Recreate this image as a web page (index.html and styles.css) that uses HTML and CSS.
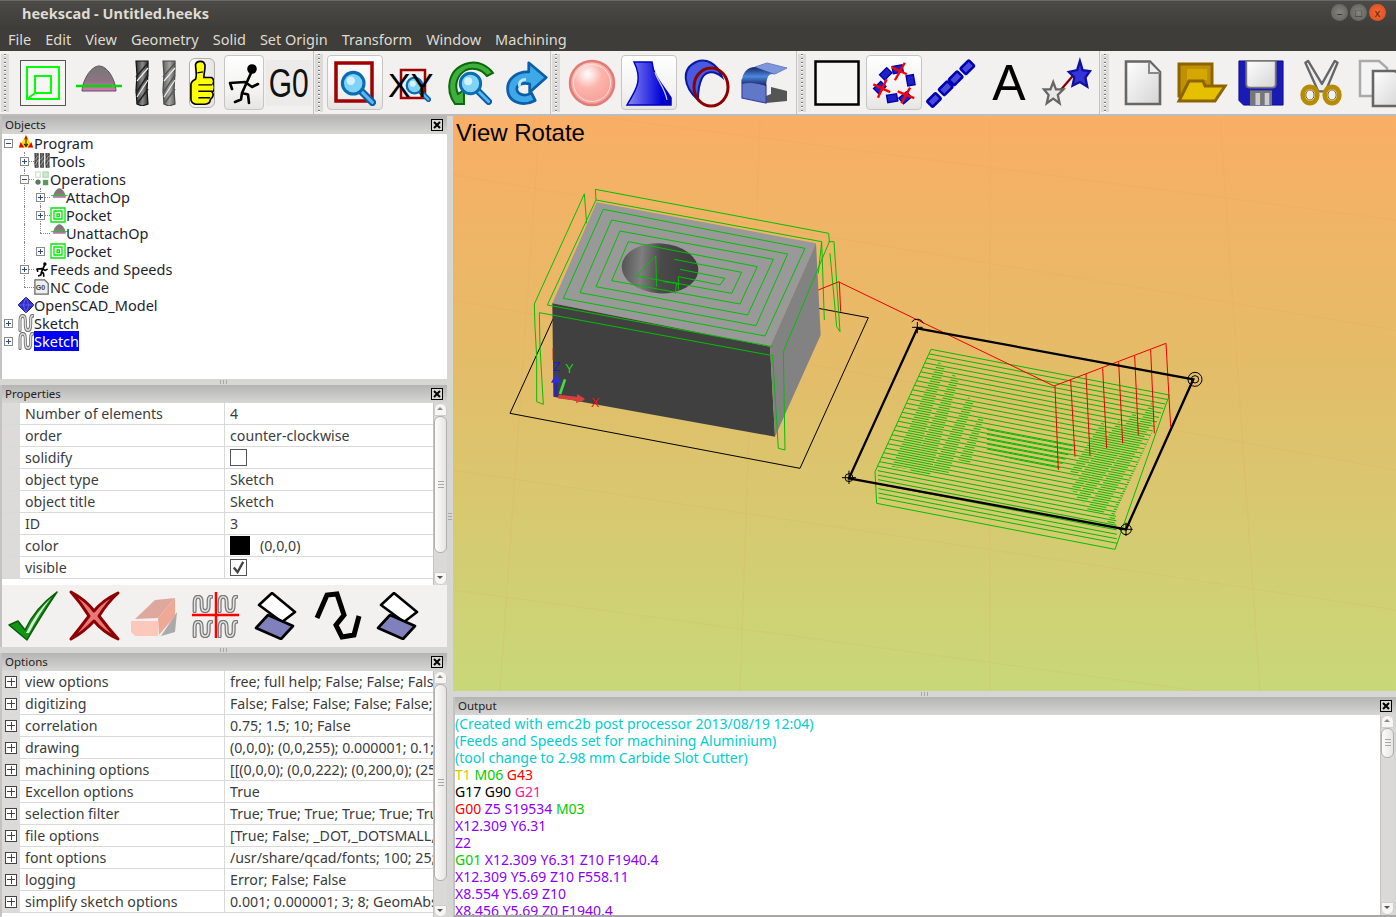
FILE: index.html
```html
<!DOCTYPE html>
<html lang="en">
<head>
<meta charset="utf-8">
<title>heekscad - Untitled.heeks</title>
<link rel="stylesheet" href="styles.css">
</head>
<body>
<svg class="defs" width="0" height="0">
	<defs>
		<linearGradient id="g_steel" x1="0" x2="1" y1="0" y2="0"><stop offset="0" stop-color="#333"/><stop offset=".55" stop-color="#8a8a8a"/><stop offset="1" stop-color="#333"/></linearGradient>
		<linearGradient id="g_dome" x1="0" x2="0" y1="0" y2="1"><stop offset="0" stop-color="#777"/><stop offset=".6" stop-color="#8d7482"/><stop offset="1" stop-color="#e070c0"/></linearGradient>
		<radialGradient id="g_ball" cx=".4" cy=".3" r=".8"><stop offset="0" stop-color="#fff"/><stop offset=".4" stop-color="#fcb4ac"/><stop offset="1" stop-color="#f49a92"/></radialGradient>
		<linearGradient id="g_blue" x1="0" x2="1" y1="0" y2="0"><stop offset="0" stop-color="#8a8cf4"/><stop offset=".8" stop-color="#0000d8"/><stop offset="1" stop-color="#0000b0"/></linearGradient>
		<linearGradient id="g_band" x1="0" x2="0" y1="0" y2="1"><stop offset="0" stop-color="#16246a"/><stop offset=".5" stop-color="#4c88dc"/><stop offset="1" stop-color="#10205c"/></linearGradient>
		<linearGradient id="g_paper" x1="0" x2="1" y1="0" y2="1"><stop offset="0" stop-color="#fff"/><stop offset="1" stop-color="#d4d4d4"/></linearGradient>
		<linearGradient id="g_hole" x1="0" x2="1" y1="0" y2="0"><stop offset="0" stop-color="#555"/><stop offset=".25" stop-color="#807f7f"/><stop offset=".5" stop-color="#4a4a4a"/><stop offset="1" stop-color="#3c3c3c"/></linearGradient>

		<symbol id="s_pocket" viewBox="0 0 46 46">
			<rect x=".5" y=".5" width="45" height="45" fill="#f6f6f5" stroke="#555"/>
			<path d="M7 7H39V39H7ZM15 16H31V33H15ZM7 39L15 33" fill="none" stroke="#0f0" stroke-width="2"/>
		</symbol>
		<symbol id="s_mini_pocket" viewBox="0 0 16 16">
			<path d="M1 1H15V15H1ZM4 4H12V12H4ZM7 7H9.500V9.500H7Z" fill="none" stroke="#00e800" stroke-width="1.300"/>
		</symbol>
		<symbol id="s_op" viewBox="0 0 50 46">
			<path d="M9 31C10 18 19 6 26 6C34 6 42 18 43 31Z" fill="url(#g_dome)" stroke="#555"/>
			<path d="M3 26H49" stroke="#0d0" stroke-width="2.500"/>
		</symbol>
		<symbol id="s_tool" viewBox="0 0 16 46" preserveAspectRatio="none">
			<path d="M2 1H14V12L13 30L14 44L8 46L3 44L2 30L3 15Z" fill="url(#g_steel)" stroke="#111" stroke-width="1.200"/>
			<path d="M2 17L14 3M2 33L14 15M3 44L14 29" stroke="#222" stroke-width="1.500"/>
			<path d="M3 21L14 8M3 37L14 20" stroke="#eee" stroke-width="1.200"/>
		</symbol>
		<symbol id="s_thumb" viewBox="0 0 26 50">
			<path d="M6 5C7 1 15 0 16 5C17 9 15 14 15 19L23 19C26 20 26 24 25 26C27 28 27 33 24 35C26 37 25 41 22 43C22 47 19 48 16 48H6C2 47 1 45 1 42V27C1 24 4 22 6 21C8 17 6 10 6 5Z" fill="#ff0" stroke="#000" stroke-width="1.800"/>
			<path d="M9 27H24M9 34H24M9 41H22M8 14L14 13" fill="none" stroke="#000" stroke-width="1.500"/>
		</symbol>
		<symbol id="s_run" viewBox="0 0 40 50">
			<circle cx="28" cy="11" r="4.800" fill="#000"/>
			<path class="run_path" d="M27 15L18 35L24 36.500L25 45M18 35L17 41.500L11 44M21 24L6 25L8 31M21 24L28 29L34 26" fill="none" stroke="#000" stroke-linecap="round" stroke-linejoin="round"/>
		</symbol>
		<symbol id="s_glass" viewBox="0 0 30 30">
			<path d="M17 17L27 27" stroke="#0a60a8" stroke-width="6" stroke-linecap="round"/>
			<path d="M17 17L27 27" stroke="#5cb8ec" stroke-width="2.500" stroke-linecap="round"/>
			<circle cx="11" cy="11" r="9" fill="#7fd4f6" stroke="#0a6cb4" stroke-width="2.600"/>
			<circle cx="9" cy="9" r="3.500" fill="#d4f2fc"/>
		</symbol>
		<symbol id="s_lasso" viewBox="0 0 46 48">
			<path d="M5 13L18 1L41 20L28 30Z" fill="#fff" stroke="#000" stroke-width="2.600" stroke-linejoin="round"/>
			<path d="M2 36L14 23L39 34L27 47Z" fill="#8080bc" stroke="#000" stroke-width="2.600" stroke-linejoin="round"/>
		</symbol>
		<symbol id="s_sketch" viewBox="0 0 24 20" preserveAspectRatio="none">
			<g fill="none" stroke-linecap="round">
				<path d="M3 18V8Q3 2 7 2T11 8V12Q11 18 15 18T19 12V6Q19 2 22 2" stroke="#777" stroke-width="4.600"/>
				<path d="M3 18V8Q3 2 7 2T11 8V12Q11 18 15 18T19 12V6Q19 2 22 2" stroke="#e4e4e4" stroke-width="1.800"/>
			</g>
		</symbol>
		<symbol id="s_program" viewBox="0 0 18 18">
			<path d="M9 0L17 14H1Z" fill="#fd0"/>
			<path d="M9 0L11 5H7ZM1 14L3 8L7 14ZM17 14L15 8L11 14Z" fill="#e00"/>
			<path d="M9 5V12M7 10L9 13L11 10" fill="none" stroke="#222" stroke-width="1.200"/>
		</symbol>
		<symbol id="s_ops" viewBox="0 0 18 18">
			<rect x="2" y="1" width="5" height="6" fill="none" stroke="#b8d8b8"/>
			<rect x="10" y="1" width="6" height="6" fill="#cfe8cf" stroke="#a8d0a8"/>
			<circle cx="4.500" cy="12.500" r="3" fill="#5a7a5a"/>
			<rect x="10" y="10" width="6" height="6" fill="#5a9a5a"/>
		</symbol>
		<symbol id="s_nc" viewBox="0 0 18 18">
			<path d="M1 1H12L16 5V17H1Z" fill="#eee" stroke="#666" stroke-width="1.400"/>
			<text x="2" y="12.500" class="nc_text">G0</text>
		</symbol>
		<symbol id="s_model" viewBox="0 0 18 18">
			<path d="M9 0L18 9L9 18L0 9Z" fill="#3030c8" stroke="#101088"/>
			<path d="M9 0L6 9L9 18M9 0L12 9L9 18M0 9H18" fill="none" stroke="#6a6af0" stroke-width=".8"/>
		</symbol>

		<path id="hatch" d="M303 148l715 137m-721.170-123.520l715 137m-721.170-123.520l715 137m-721.170-123.520l715 137m-721.170-123.520l715 137m-721.170-123.520l715 137m-721.170-123.520l715 137m-721.170-123.520l715 137m-721.170-123.520l715 137m-721.170-123.520l715 137m-721.170-123.520l715 137m-721.170-123.520l715 137m-721.170-123.520l715 137m-721.170-123.520l715 137m-721.170-123.520l715 137m-721.170-123.520l715 137m-721.170-123.520l715 137m-721.170-123.520l715 137m-721.170-123.520l715 137m-721.170-123.520l715 137m-721.170-123.520l715 137m-721.170-123.520l715 137m-721.170-123.520l715 137m-721.170-123.520l715 137m-721.170-123.520l715 137m-721.170-123.520l715 137m-721.170-123.520l715 137m-714.500-123.520l715 137m-714.500-123.520l715 137m-714.500-123.520l715 137m-714.500-123.520l715 137m-714.500-123.520l715 137m-714.500-123.520l715 137m-714.500-123.520l715 137"/>
		<clipPath id="c_ridges">
			<path d="M325 185L345 200L250 510L185 500Z"/>
			<path d="M370 220L385 240L300 525L240 515Z"/>
			<path d="M415 290L430 310L355 520L305 510Z"/>
			<path d="M450 345L460 360L420 490L385 480Z"/>
			<path d="M1018 290L1022 340L880 680L830 670Z"/>
			<path d="M965 305L975 350L820 640L770 630Z"/>
			<path d="M915 330L925 380L765 610L735 600Z"/>
			<path d="M868 360L875 410L740 580L720 570Z"/>
			<path d="M820 360L828 420L735 530L715 525Z"/>
		</clipPath>
		<clipPath id="c_center">
			<path d="M470 385L735 435L685 510L470 460Z"/>
		</clipPath>
	</defs>
</svg>

<div class="window">
	<div class="titlebar">
		<span class="title">heekscad - Untitled.heeks</span>
		<div class="win_btns">
			<span class="win_btn">&#8211;</span>
			<span class="win_btn">&#9633;</span>
			<span class="win_btn close">x</span>
		</div>
	</div>
	<ul class="menubar">
		<li>File</li>
		<li>Edit</li>
		<li>View</li>
		<li>Geometry</li>
		<li>Solid</li>
		<li>Set Origin</li>
		<li>Transform</li>
		<li>Window</li>
		<li>Machining</li>
	</ul>

	<div class="toolbar">
		<div class="tb_group g_cam">
			<span class="grip"></span>
			<span class="tb_btn w54"><svg class="ic"><use href="#s_pocket"/></svg></span>
			<span class="tb_btn w56"><svg class="ic wide"><use href="#s_op"/></svg></span>
			<span class="tb_btn w32"><svg class="ic drill"><use href="#s_tool"/></svg></span>
			<span class="tb_btn w22"><svg class="ic drill soft"><use href="#s_tool"/></svg></span>
			<span class="tb_btn w44"><svg class="ic thumb"><use href="#s_thumb"/></svg></span>
			<span class="tb_btn w40 on"><svg class="ic run"><use href="#s_run"/></svg></span>
			<span class="tb_btn w50"><span class="g0">G0</span></span>
		</div>
		<div class="tb_group g_view">
			<span class="grip"></span>
			<span class="tb_btn w56 on">
				<svg class="ic" viewBox="0 0 46 46"><rect x="4" y="3" width="36" height="38" fill="none" stroke="#a00000" stroke-width="3.500"/><use href="#s_glass" x="8" y="10" width="36" height="36"/></svg>
			</span>
			<span class="tb_btn">
				<svg class="ic" viewBox="0 0 46 46"><rect x="12" y="10" width="24" height="28" fill="none" stroke="#a00000" stroke-width="2.500"/><use href="#s_glass" x="16" y="16" width="26" height="26"/><text x="-1" y="37" class="xy_text">XY</text></svg>
			</span>
			<span class="tb_btn">
				<svg class="ic" viewBox="0 0 46 46"><path d="M8 44C-2 30 0 8 22 3C32 1 41 6 46 13L40 16C34 9 26 7 19 10C10 15 7 25 11 34L17 30L17 44Z" fill="#3fae3f" stroke="#0a6a0a" stroke-width="2"/><use href="#s_glass" x="11" y="11" width="34" height="34"/></svg>
			</span>
			<span class="tb_btn w54">
				<svg class="ic" viewBox="-2 -2 50 50"><path d="M26 1L45 17L27 33V24C18 22 13 26 13 29C13 36 22 38 29 34L33 42C18 50 3 43 3 29C3 18 14 10 26 11Z" fill="#3fa8e8" stroke="#0a5fa8" stroke-width="3" stroke-linejoin="round"/><path d="M23 19C18 19 15 22 16 27" fill="none" stroke="#bfe8fc" stroke-width="3"/></svg>
			</span>
		</div>
		<div class="tb_group g_solid">
			<span class="grip"></span>
			<span class="tb_btn w56">
				<svg class="ic" viewBox="0 0 46 46"><circle cx="23" cy="23" r="22" fill="url(#g_ball)" stroke="#e07c78" stroke-width="2.500"/><circle cx="23" cy="23" r="18.500" fill="none" stroke="#fde0dc" stroke-width="1"/></svg>
			</span>
			<span class="tb_btn on rev">
				<svg class="ic" viewBox="0 0 46 46"><path d="M8 2H26C27 16 38 26 45 38V45H1C8 32 18 22 8 2Z" fill="url(#g_blue)" stroke="#0000c0" stroke-width="1.500"/><path d="M29 12C31 20 39 28 41 40" fill="none" stroke="#c8ccfa" stroke-width="1.200"/></svg>
			</span>
			<span class="tb_btn">
				<svg class="ic" viewBox="0 0 46 46"><path d="M14 40C-1 26 -3 9 12 2C22 -2 33 3 38 17C30 10 22 11 18 18C15 24 14 32 14 40Z" fill="#4a5ae0" stroke="#0a1aa0" stroke-width="2"/><ellipse cx="27" cy="27" rx="17" ry="19" fill="none" stroke="#8c0000" stroke-width="3"/></svg>
			</span>
			<span class="tb_btn w56">
				<svg class="ic" viewBox="0 0 46 46"><path d="M30 27L46 31V41L25 43V36L30 34Z" fill="#555"/><path d="M14 7L26 3L46 8L34 14L16 12Z" fill="#7f96dc" stroke="#6a80c8"/><path d="M1 20L25 25V43L1 38Z" fill="#6078c8" stroke="#3f3fa8" stroke-width="1.200"/><path d="M1 24C0 14 6 7 14 7L34 14C28 13 26 16 25 26C18 23 8 22 1 24Z" fill="url(#g_band)"/></svg>
			</span>
		</div>
		<div class="tb_group g_draw">
			<span class="grip"></span>
			<span class="tb_btn"><svg class="ic" viewBox="0 0 46 46"><rect x="1.500" y="1.500" width="43" height="43" fill="#f6f6f5" stroke="#000" stroke-width="2.500"/></svg></span>
			<span class="tb_btn on w56">
				<svg class="ic" viewBox="0 0 50 50">
					<g fill="#2020c8" stroke="#0000a8" stroke-width="1.500">
						<rect x="-4" y="-5.500" width="8" height="11" transform="translate(16 15) rotate(45)"/>
						<rect x="-4" y="-5.500" width="8" height="11" transform="translate(29 10) rotate(80)"/>
						<rect x="-4" y="-5.500" width="8" height="11" transform="translate(43 22) rotate(-10)"/>
						<rect x="-4" y="-5.500" width="8" height="11" transform="translate(37 41) rotate(50)"/>
						<rect x="-4" y="-5.500" width="8" height="11" transform="translate(23 41.500) rotate(80)"/>
						<rect x="-4" y="-5.500" width="8" height="11" transform="translate(9.500 30) rotate(45)"/>
					</g>
					<path d="M26 22L36.700 3M22.500 8L39 15.500M7.500 41L17 21M2.500 26.500L20.800 35M33 47L42.500 30M29 34L47 41.500" stroke="#f00" stroke-width="2.600"/>
				</svg>
			</span>
			<span class="tb_btn">
				<svg class="ic" viewBox="0 0 46 46">
					<g fill="#4a4adc" stroke="#0000b0" stroke-width="2.600">
						<rect x="-4" y="-6" width="8" height="12" rx="1" transform="translate(39.300 7.300) rotate(45)"/>
						<rect x="-4" y="-6" width="8" height="12" rx="1" transform="translate(27.700 18.300) rotate(45)"/>
						<rect x="-4" y="-6" width="8" height="12" rx="1" transform="translate(17.700 28.300) rotate(45)"/>
						<rect x="-4" y="-6" width="8" height="12" rx="1" transform="translate(6 40) rotate(45)"/>
					</g>
				</svg>
			</span>
			<span class="tb_btn"><span class="big_a">A</span></span>
			<span class="tb_btn">
				<svg class="ic" viewBox="0 0 50 50"><path d="M10 42L34 14" stroke="#8c0000" stroke-width="2.500"/><path d="M10 24L13 32L21 32L15 38L17 47L10 42L3 47L5 38L0 32L7 32Z" fill="#e8e8e8" stroke="#666" stroke-width="2.500"/><path d="M39 1L42 11L50 12L45 19L47 29L39 24L31 28L33 19L27 13L36 11Z" fill="#3434d8" stroke="#1010a0" stroke-width="2.500"/></svg>
			</span>
		</div>
		<div class="tb_group g_file">
			<span class="grip"></span>
			<span class="tb_btn w60"><svg class="ic" viewBox="0 0 46 46"><path d="M6 1.500H30L40 12V44H6Z" fill="url(#g_paper)" stroke="#666" stroke-width="2.600"/><path d="M29 2V13H40" fill="#eee" stroke="#888" stroke-width="2"/></svg></span>
			<span class="tb_btn"><svg class="ic folder" viewBox="0 0 50 46"><path d="M2 4H35V36H2Z" fill="#c09000" stroke="#8c6400" stroke-width="3"/><path d="M10 9H30V20H16L10 31Z" fill="#d4a800"/><path d="M2 41L12 21H26L28 26H48L38 41Z" fill="#e4c000" stroke="#8c6400" stroke-width="3"/></svg></span>
			<span class="tb_btn w60"><svg class="ic folder" viewBox="0 0 50 50"><path d="M1 1H49V49H6L1 44Z" fill="#1a1ab4" stroke="#0a0a90"/><path d="M9 1H41V26Q41 30 37 30H13Q9 30 9 26Z" fill="url(#g_paper)" stroke="#777" stroke-width="2"/><path d="M13 33H37V49H13Z" fill="#777"/><path d="M19 36H24V49H19ZM29 36H34V49H29Z" fill="#ccc"/></svg></span>
			<span class="tb_btn w60"><svg class="ic" viewBox="0 0 46 50"><path d="M9 1L24 26L38 1L41 3L28 34L20 34L6 3Z" fill="#eee" stroke="#666" stroke-width="2.500" stroke-linejoin="round"/><g fill="none" stroke="#b88c00" stroke-width="5"><ellipse cx="11" cy="38" rx="8" ry="9"/><ellipse cx="35" cy="38" rx="8" ry="9"/></g><g fill="none" stroke="#6a5000"><ellipse cx="11" cy="38" rx="4.500" ry="5.500"/><ellipse cx="35" cy="38" rx="4.500" ry="5.500"/></g></svg></span>
			<span class="tb_btn"><svg class="ic" viewBox="0 0 46 46"><path d="M3 1H22L30 8V36H3Z" fill="#f4f4f4" stroke="#aaa" stroke-width="2.500"/><path d="M16 11H38L46 18V46H16Z" fill="url(#g_paper)" stroke="#666" stroke-width="2.600"/></svg></span>
		</div>
	</div>

	<div class="main">
		<div class="left_col">
			<section class="pane p_objects">
				<header class="pane_head">Objects<svg class="x_box" viewBox="0 0 12 12"><rect x=".5" y=".5" width="11" height="11" fill="#d8d8d6" stroke="#000"/><path d="M3 3L9 9M9 3L3 9" stroke="#000" stroke-width="2"/></svg></header>
				<div class="tree">
					<div class="t_row"><span class="t_cell"><i class="t_box"></i></span><svg class="t_ic"><use href="#s_program"/></svg>Program</div>
					<div class="t_row"><span class="t_cell"></span><span class="t_cell tee"><i class="t_box plus"></i></span><svg class="t_ic"><use href="#s_tool" x="0" y="1" width="5" height="15"/><use href="#s_tool" x="5.500" y="1" width="5" height="15"/><use href="#s_tool" x="11" y="1" width="5" height="15"/></svg>Tools</div>
					<div class="t_row"><span class="t_cell"></span><span class="t_cell tee"><i class="t_box"></i></span><svg class="t_ic"><use href="#s_ops"/></svg>Operations</div>
					<div class="t_row"><span class="t_cell"></span><span class="t_cell line"></span><span class="t_cell tee"><i class="t_box plus"></i></span><svg class="t_ic"><use href="#s_op" width="18" height="17" y="-2"/></svg>AttachOp</div>
					<div class="t_row"><span class="t_cell"></span><span class="t_cell line"></span><span class="t_cell tee"><i class="t_box plus"></i></span><svg class="t_ic"><use href="#s_mini_pocket"/></svg>Pocket</div>
					<div class="t_row"><span class="t_cell"></span><span class="t_cell line"></span><span class="t_cell end"></span><svg class="t_ic"><use href="#s_op" width="18" height="17" y="-2"/></svg>UnattachOp</div>
					<div class="t_row"><span class="t_cell"></span><span class="t_cell line"></span><span class="t_cell plain"><i class="t_box plus"></i></span><svg class="t_ic"><use href="#s_mini_pocket"/></svg>Pocket</div>
					<div class="t_row"><span class="t_cell"></span><span class="t_cell tee"><i class="t_box plus"></i></span><svg class="t_ic mini_run"><use href="#s_run"/></svg>Feeds and Speeds</div>
					<div class="t_row"><span class="t_cell"></span><span class="t_cell end"></span><svg class="t_ic"><use href="#s_nc"/></svg>NC Code</div>
					<div class="t_row"><span class="t_cell"></span><svg class="t_ic"><use href="#s_model"/></svg>OpenSCAD_Model</div>
					<div class="t_row"><span class="t_cell"><i class="t_box plus"></i></span><svg class="t_ic"><use href="#s_sketch"/></svg>Sketch</div>
					<div class="t_row"><span class="t_cell"><i class="t_box plus"></i></span><svg class="t_ic"><use href="#s_sketch"/></svg><span class="t_sel">Sketch</span></div>
				</div>
			</section>
			<div class="split_h"></div>

			<section class="pane p_props">
				<header class="pane_head">Properties<svg class="x_box" viewBox="0 0 12 12"><rect x=".5" y=".5" width="11" height="11" fill="#d8d8d6" stroke="#000"/><path d="M3 3L9 9M9 3L3 9" stroke="#000" stroke-width="2"/></svg></header>
				<div class="grid_wrap">
					<div class="prop_grid">
						<div class="p_row"><span class="gutter"></span><span class="p_name">Number of elements</span><span class="p_val">4</span></div>
						<div class="p_row"><span class="gutter"></span><span class="p_name">order</span><span class="p_val">counter-clockwise</span></div>
						<div class="p_row"><span class="gutter"></span><span class="p_name">solidify</span><span class="p_val"><i class="check"></i></span></div>
						<div class="p_row"><span class="gutter"></span><span class="p_name">object type</span><span class="p_val">Sketch</span></div>
						<div class="p_row"><span class="gutter"></span><span class="p_name">object title</span><span class="p_val">Sketch</span></div>
						<div class="p_row"><span class="gutter"></span><span class="p_name">ID</span><span class="p_val">3</span></div>
						<div class="p_row"><span class="gutter"></span><span class="p_name">color</span><span class="p_val"><i class="swatch"></i>(0,0,0)</span></div>
						<div class="p_row"><span class="gutter"></span><span class="p_name">visible</span><span class="p_val"><i class="check"><svg viewBox="0 0 16 16"><path d="M3 8L7 13L13 2" fill="none" stroke="#444" stroke-width="2.500"/></svg></i></span></div>
					</div>
					<div class="vscroll s_props"><span class="arrow up"></span><span class="thumb"></span><span class="track"></span><span class="arrow down"></span></div>
				</div>
				<div class="input_bar">
					<svg class="ib_ic" viewBox="0 0 48 48"><path d="M0 33L9 29L16 38Q26 16 48 0Q33 22 18 48Z" fill="#149414" stroke="#0a5a0a" stroke-width="1.500" stroke-linejoin="round"/><path d="M17 41Q27 20 42 6Q30 22 20 41Z" fill="#d8f0d8"/></svg>
					<svg class="ib_ic" viewBox="0 0 48 48"><path d="M1 0Q16 8 24 19Q33 8 48 1Q37 11 29 24Q38 36 48 47Q33 40 24 29Q14 40 1 47Q10 36 19 24Q11 11 1 0Z" fill="#e87878" stroke="#8c0000" stroke-width="3" stroke-linejoin="round"/></svg>
					<svg class="ib_ic" viewBox="0 0 48 48"><path d="M46 20L44 40L20 47L30 44Z" fill="#aaa"/><path d="M4 27L24 8L44 6L27 26Z" fill="#dfa89e"/><path d="M27 26L44 6V24L28 43Z" fill="#f0a896"/><path d="M0 29H27V44H4L0 40Z" fill="#fdc8bc"/></svg>
					<svg class="ib_ic" viewBox="0 0 48 48"><use href="#s_sketch" x="0" y="3" width="21" height="18"/><use href="#s_sketch" x="25" y="3" width="21" height="18"/><use href="#s_sketch" x="0" y="28" width="21" height="18"/><use href="#s_sketch" x="25" y="28" width="21" height="18"/><path d="M24 0V46M0 23H47" stroke="#f00" stroke-width="2.500"/></svg>
					<svg class="ib_ic"><use href="#s_lasso"/></svg>
					<svg class="ib_ic" viewBox="0 0 48 48"><path d="M3 26L13 3L23 2L30 23L22 33L28 45L40 43L45 24" fill="none" stroke="#000" stroke-width="5"/></svg>
					<svg class="ib_ic"><use href="#s_lasso"/></svg>
				</div>
			</section>
			<div class="split_h"></div>

			<section class="pane p_options">
				<header class="pane_head">Options<svg class="x_box" viewBox="0 0 12 12"><rect x=".5" y=".5" width="11" height="11" fill="#d8d8d6" stroke="#000"/><path d="M3 3L9 9M9 3L3 9" stroke="#000" stroke-width="2"/></svg></header>
				<div class="grid_wrap">
					<div class="prop_grid">
						<div class="p_row"><span class="gutter"><i class="o_box"></i></span><span class="p_name">view options</span><span class="p_val">free; full help; False; False; False; True</span></div>
						<div class="p_row"><span class="gutter"><i class="o_box"></i></span><span class="p_name">digitizing</span><span class="p_val">False; False; False; False; False; True</span></div>
						<div class="p_row"><span class="gutter"><i class="o_box"></i></span><span class="p_name">correlation</span><span class="p_val">0.75; 1.5; 10; False</span></div>
						<div class="p_row"><span class="gutter"><i class="o_box"></i></span><span class="p_name">drawing</span><span class="p_val">(0,0,0); (0,0,255); 0.000001; 0.1; 1; True</span></div>
						<div class="p_row"><span class="gutter"><i class="o_box"></i></span><span class="p_name">machining options</span><span class="p_val">[[(0,0,0); (0,0,222); (0,200,0); (255,0,0)</span></div>
						<div class="p_row"><span class="gutter"><i class="o_box"></i></span><span class="p_name">Excellon options</span><span class="p_val">True</span></div>
						<div class="p_row"><span class="gutter"><i class="o_box"></i></span><span class="p_name">selection filter</span><span class="p_val">True; True; True; True; True; True; True</span></div>
						<div class="p_row"><span class="gutter"><i class="o_box"></i></span><span class="p_name">file options</span><span class="p_val">[True; False; _DOT,_DOTSMALL,_DOTLARGE</span></div>
						<div class="p_row"><span class="gutter"><i class="o_box"></i></span><span class="p_name">font options</span><span class="p_val">/usr/share/qcad/fonts; 100; 25; 1; True</span></div>
						<div class="p_row"><span class="gutter"><i class="o_box"></i></span><span class="p_name">logging</span><span class="p_val">Error; False; False</span></div>
						<div class="p_row"><span class="gutter"><i class="o_box"></i></span><span class="p_name">simplify sketch options</span><span class="p_val">0.001; 0.000001; 3; 8; GeomAbs_C1; True</span></div>
					</div>
					<div class="vscroll s_options"><span class="arrow up"></span><span class="thumb"></span><span class="track"></span><span class="arrow down"></span></div>
				</div>
			</section>
		</div>
		<div class="split_v"></div>

		<div class="right_col">
			<div class="viewport">
				<svg class="scene" viewBox="453 116 943 575">
					<g class="grid_lines">
						<path d="M453 175L1396 330M453 300L1396 470M453 470L1396 610M453 590L1200 691M600 117L1396 220"/>
						<path d="M540 117L500 691M760 117L740 691M990 117L990 691M1220 117L1260 691"/>
					</g>
					<text x="456" y="141" class="view_label">View Rotate</text>

					<g transform="translate(490 170) scale(.33333)">
						<path class="thin" d="M190 445L60 730L930 895L1135 443L985 415"/>
						<path d="M320 97L978 220L840 530L187 400Z" fill="#999"/>
						<path d="M187 400L840 530L855 800L190 680Z" fill="#404040"/>
						<path d="M978 220L992 495L855 800L840 530Z" fill="#828282"/>
						<ellipse cx="510" cy="295" rx="115" ry="75" fill="url(#g_hole)" transform="rotate(4 510 295)"/>
						<g class="path_green">
							<path d="M316 58L1016 190L1018 215L880 545L885 840L865 835L848 557L148 428L150 530L160 703L140 695L140 560L135 470L133 402L283 72L290 160"/>
							<path d="M316 58L318 90L172 405L848 530M318 90L995 215L985 310M1016 215L1032 215L1050 485L1040 470L1020 250M995 215L1003 450"/>
							<path d="M340 118L945 235L825 498L220 385Z"/>
							<path d="M365 150L893 252L798 467L270 368Z"/>
							<path d="M390 183L850 268L773 435L318 350Z"/>
							<path d="M415 215L802 290L750 402L365 332Z"/>
							<path d="M553 268L755 307L725 370L440 318L497 258L500 350M570 298L705 325L690 345L565 320L565 360M520 335L560 340L555 372"/>
						</g>
						<path class="path_red" d="M985 360L1047 335M1048 335L1052 425"/>
						<path d="M190 535V570" stroke="#e00" stroke-width="4"/>
						<path d="M205 680L280 688" stroke="#d84040" stroke-width="11"/>
						<path d="M262 672L285 688L258 700Z" fill="#d84040"/>
						<path d="M198 680V630" stroke="#2a2ab0" stroke-width="11"/>
						<path d="M198 610L214 638H183Z" fill="#3030d0"/>
						<path d="M210 672L225 628" stroke="#40e040" stroke-width="8"/>
						<text x="188" y="604" class="axis ax_z">Z</text>
						<text x="226" y="610" class="axis ax_y">Y</text>
						<text x="303" y="711" class="axis ax_x">X</text>
					</g>

					<g transform="translate(830 300) scale(.33333)">
						<g class="hatch">
							<use href="#hatch"/>
							<g clip-path="url(#c_ridges)"><use href="#hatch" x="-3.080" y="6.740"/></g>
							<g clip-path="url(#c_center)"><use href="#hatch" y="3"/></g>
						</g>
						<path class="path_green" d="M303 148L135 515L140 610M1018 285L855 748M140 610L855 748"/>
						<path class="path_red" d="M27 -54L672 258L1008 130M675 258L685 510M722 240L735 470M768 222L780 465M818 205L830 445M866 187L878 430M914 168L925 405M962 150L973 400M1008 130L1022 380"/>
						<path d="M262 85L1090 238L888 688L57 535Z" fill="none" stroke="#000" stroke-width="7"/>
						<g fill="none" stroke="#000" stroke-width="3">
							<circle cx="1095" cy="238" r="21"/><circle cx="1095" cy="238" r="11"/>
							<path d="M245 66A20 20 0 0 1 280 70M262 66V100M246 82H278"/>
							<circle cx="888" cy="688" r="16"/><path d="M888 668V708M868 688H908"/>
							<circle cx="57" cy="533" r="12"/><path d="M57 512V552M36 533H78"/>
						</g>
					</g>
				</svg>
			</div>
			<div class="split_h"></div>
			<section class="pane p_output">
				<header class="pane_head">Output<svg class="x_box" viewBox="0 0 12 12"><rect x=".5" y=".5" width="11" height="11" fill="#d8d8d6" stroke="#000"/><path d="M3 3L9 9M9 3L3 9" stroke="#000" stroke-width="2"/></svg></header>
				<div class="grid_wrap">
					<div class="nc_list">
						<div class="c_cyan">(Created with emc2b post processor 2013/08/19 12:04)</div>
						<div class="c_cyan">(Feeds and Speeds set for machining Aluminium)</div>
						<div class="c_cyan">(tool change to 2.98 mm Carbide Slot Cutter)</div>
						<div><span class="c_yellow">T1</span> <span class="c_green">M06</span> <span class="c_red">G43</span></div>
						<div>G17 G90 <span class="c_pink">G21</span></div>
						<div><span class="c_red">G00</span> <span class="c_purple">Z5 S19534</span> <span class="c_green">M03</span></div>
						<div class="c_purple">X12.309 Y6.31</div>
						<div class="c_purple">Z2</div>
						<div class="c_purple"><span class="c_green">G01</span> X12.309 Y6.31 Z10 F1940.4</div>
						<div class="c_purple">X12.309 Y5.69 Z10 F558.11</div>
						<div class="c_purple">X8.554 Y5.69 Z10</div>
						<div class="c_purple">X8.456 Y5.69 Z0 F1940.4</div>
					</div>
					<div class="vscroll s_output"><span class="arrow up"></span><span class="thumb"></span><span class="track"></span><span class="arrow down"></span></div>
				</div>
			</section>
		</div>
	</div>
</div>
</body>
</html>
```

FILE: styles.css
```css
* {margin:0; padding:0; box-sizing:border-box}
li {list-style:none}
i {display:block}
html, body {height:100%; overflow:hidden}
body {background:#d6d6d4; font-family:"Noto Sans", "Open Sans", sans-serif; color:#3c3c3c}
.defs {position:absolute}

.window {
	display:flex;
	flex-direction:column;
	width:1396px;
	height:917px;
	overflow:hidden;
}

/* title + menu */
.titlebar {
	display:flex;
	align-items:center;
	justify-content:space-between;
	height:26px;
	padding:0 10px 2px 22px;
	background:linear-gradient(#4b4a46, #3f3e3a);
	border-top:1px solid #6a6964;
}
.title {font-size:14.500px; font-weight:700; color:#dfdbd2}
.win_btns {display:flex; gap:2px}
.win_btn {
	display:flex;
	align-items:center;
	justify-content:center;
	width:17px;
	height:17px;
	border-radius:50%;
	background:radial-gradient(#86857f, #5c5b56);
	color:#33322e;
	font-size:11px;
	line-height:1;
}
.win_btn.close {background:radial-gradient(#f0693a, #d94c16); color:#5a2008}
.menubar {
	display:flex;
	flex:none;
	height:25px;
	padding-left:1px;
	background:#3e3d39;
	color:#dfdbd2;
	font-size:14.500px;
	line-height:27px;
}
.menubar > li {padding:0 7px}

/* main toolbar */
.toolbar {
	display:flex;
	flex:none;
	height:65px;
	background:#f2f1f0;
	border-bottom:2px solid #bdbcba;
	overflow:hidden;
}
.tb_group {
	display:flex;
	flex:none;
	align-items:center;
	height:63px;
	padding-left:1px;
	border-right:1px solid #c4c3c1;
}
.g_cam {width:314px}
.g_view {width:237px}
.g_solid {width:246px}
.g_draw {width:303px}
.g_file {width:300px; border-right:0}
.grip {
	flex:none;
	width:8px;
	height:58px;
	margin-right:4px;
	background:
		repeating-linear-gradient(#77767a 0 1px, #fff 1px 2px, transparent 2px 4px) center / 2px 100% no-repeat,
		#dcdbd9;
}
.g_cam .grip {margin-right:7px}
.g_draw .grip {margin-right:2px}
.tb_btn {
	display:flex;
	flex:none;
	align-items:center;
	justify-content:center;
	width:58px;
	height:55px;
}
.tb_btn.w22 {width:22px}
.tb_btn.w32 {width:32px}
.tb_btn.w40 {width:40px}
.tb_btn.w44 {width:44px}
.tb_btn.w50 {width:50px}
.tb_btn.w54 {width:54px}
.tb_btn.w56 {width:56px}
.tb_btn.w60 {width:60px}
.tb_btn.on {
	background:linear-gradient(#fff, #f2f1f0 70%, #e6e5e3);
	border:1px solid #c6c5c3;
	border-radius:4px;
}
.tb_btn.rev {width:56px; margin:0 1px}
.ic {display:block; width:46px; height:46px; overflow:visible}
.ic.wide {width:50px}
.ic.drill {width:16px}
.ic.drill.soft {opacity:.75}
.ic.thumb {width:26px; height:50px}
.ic.run {width:40px; height:50px}
.ic.folder {width:50px}
.run_path {stroke-width:var(--run_w, 2.600)}
.mini_run {--run_w:4.500}
.g0 {
	padding:0 4px;
	background:#ecebea;
	font-family:"Liberation Sans", sans-serif;
	font-size:40px;
	line-height:46px;
	color:#111;
	transform:scaleX(.75);
}
.big_a {
	font-family:"Liberation Sans", sans-serif;
	font-size:50px;
	line-height:50px;
	color:#000;
}
.xy_text {font-family:"Liberation Sans", sans-serif; font-size:34px; fill:#000}
.nc_text {font-family:"Liberation Sans", sans-serif; font-size:8px; font-weight:700; fill:#444}

/* layout */
.main {display:flex; flex:1; min-height:0}
.left_col {
	display:flex;
	flex:none;
	flex-direction:column;
	width:447px;
}
.right_col {
	display:flex;
	flex:1;
	flex-direction:column;
	min-width:0;
}
.split_h {
	flex:none;
	height:6px;
	background:linear-gradient(90deg, #a8a7a5 1px, transparent 1px 3px, #a8a7a5 3px 4px, transparent 4px 6px, #a8a7a5 6px 7px, transparent 7px) center / 7px 4px no-repeat;
}
.split_v {
	flex:none;
	width:6px;
	background:linear-gradient(#a8a7a5 1px, transparent 1px 3px, #a8a7a5 3px 4px, transparent 4px 6px, #a8a7a5 6px 7px, transparent 7px) center / 4px 7px no-repeat;
}
.pane {display:flex; flex-direction:column; overflow:hidden; border-left:2px solid #c4c3c1}
.pane_head {
	display:flex;
	flex:none;
	align-items:center;
	justify-content:space-between;
	height:18px;
	padding:0 4px 1px 3px;
	background:linear-gradient(#b4b4b2, #d6d6d4);
	color:#222;
	font-size:11.500px;
}
.x_box {flex:none; width:12px; height:12px}
.p_objects {flex:none; height:263px; background:#fff}
.p_props {flex:none; height:262px}
.p_options {flex:1; min-height:0}

/* tree */
.tree {background:#fff; font-size:14.500px; color:#1e1e2c}
.t_row {display:flex; align-items:center; height:18px; white-space:nowrap}
.t_cell {position:relative; flex:none; width:16px; height:18px}
.t_cell.line::before, .t_cell.tee::before, .t_cell.end::before {
	content:"";
	position:absolute;
	left:6px;
	top:0;
	height:18px;
	border-left:1px dotted #888;
}
.t_cell.end::before {height:9px}
.t_cell.tee::after, .t_cell.end::after {
	content:"";
	position:absolute;
	left:6px;
	top:9px;
	width:10px;
	border-top:1px dotted #888;
}
.t_box {
	position:absolute;
	z-index:1;
	left:2px;
	top:5px;
	width:9px;
	height:9px;
	border:1px solid #8a8a8a;
	background:linear-gradient(90deg, #2c4a8c, #2c4a8c) center / 5px 1px no-repeat #fff;
}
.t_box.plus {
	background:
		linear-gradient(90deg, #2c4a8c, #2c4a8c) center / 5px 1px no-repeat,
		linear-gradient(90deg, #2c4a8c, #2c4a8c) center / 1px 5px no-repeat,
		#fff;
}
.t_ic {flex:none; width:16px; height:18px; overflow:visible}
.t_sel {background:#0000f0; color:#fff}

/* property grids */
.grid_wrap {display:flex; flex:1; min-height:0; overflow:hidden}
.prop_grid {flex:1; min-width:0; background:#fff}
.p_row {
	display:grid;
	grid-template-columns:18px 205px 1fr;
	height:22px;
	border-bottom:1px solid #d9d9d7;
	font-size:14.200px;
	line-height:21px;
	white-space:nowrap;
}
.gutter {display:flex; align-items:center; justify-content:center; background:#dcdbd9}
.p_name {padding-left:5px; border-right:1px solid #d9d9d7}
.p_val {display:flex; align-items:center; padding-left:5px; overflow:hidden}
.p_props .prop_grid {flex:none; width:431px; height:176px}
.p_props .grid_wrap {flex:none; height:182px; background:#fff}
.check {width:17px; height:17px; border:1px solid #555; background:#fff}
.check > svg {display:block}
.swatch {width:20px; height:19px; margin-right:10px; background:#000}
.o_box {
	width:12px;
	height:12px;
	border:1px solid #444;
	background:
		linear-gradient(#444, #444) center / 8px 1px no-repeat,
		linear-gradient(#444, #444) center / 1px 8px no-repeat,
		#fff;
}
.input_bar {
	display:flex;
	flex:1;
	align-items:center;
	gap:13px;
	padding-left:7px;
	background:#f2f1f0;
}
.ib_ic {flex:none; width:48px; height:48px; overflow:visible}

/* scrollbars */
.vscroll {
	display:flex;
	flex:none;
	flex-direction:column;
	width:14px;
	background:#dad9d7;
	border-left:1px solid #c4c3c1;
}
.arrow {
	flex:none;
	position:relative;
	height:13px;
	background:#f7f6f5;
	border:1px solid #cfcecc;
}
.arrow.up {border-radius:6px 6px 0 0}
.arrow.down {border-radius:0 0 6px 6px}
.arrow::before {
	content:"";
	position:absolute;
	left:2px;
	border:3.500px solid transparent;
}
.arrow.up::before {top:0; border-bottom-color:#8a8987}
.arrow.down::before {top:3px; border-top-color:#555}
.thumb {
	position:relative;
	flex:none;
	height:30px;
	background:linear-gradient(90deg, #fcfcfc, #e6e5e3);
	border:1px solid #b0afad;
	border-radius:6px;
}
.thumb::after {
	content:"";
	position:absolute;
	left:3px;
	top:calc(50% - 4px);
	width:6px;
	height:8px;
	background:repeating-linear-gradient(#a8a7a5 0 1px, transparent 1px 3px);
}
.track {flex:1}
.s_props .thumb {height:137px}
.s_options .arrow.down {height:12px}
.s_options .thumb {height:197px}

/* 3d view */
.viewport {
	flex:none;
	height:575px;
	background:linear-gradient(#f9ae65, #e3bd69 45%, #c8d879);
}
.scene {display:block; width:943px; height:575px}
.grid_lines {fill:none; stroke:#e89a5a; stroke-width:1; opacity:.15}
.view_label {font-family:"Liberation Sans", sans-serif; font-size:24px; fill:#000}
.thin {fill:none; stroke:#000; stroke-width:3}
.hatch {fill:none; stroke:#00bc00; stroke-width:3}
.path_green {fill:none; stroke:#00c000; stroke-width:3}
.path_red {fill:none; stroke:#e80000; stroke-width:3}
.axis {font-family:"Liberation Sans", sans-serif; font-size:38px}
.ax_z {fill:#1a1ae0}
.ax_y {fill:#20d020}
.ax_x {fill:#e81010}

/* output */
.p_output {flex:1; min-height:0; border-bottom:2px solid #a8a7a5}
.nc_list {
	flex:1;
	min-width:0;
	overflow:hidden;
	background:#fff;
	color:#000;
	font-size:14px;
	line-height:17px;
	white-space:nowrap;
}
.s_output {margin-right:2px}
.s_output .thumb {height:30px}
.c_cyan {color:#00ced1}
.c_yellow {color:#cdcd00}
.c_green {color:#00cd00}
.c_red {color:#ff0000}
.c_pink {color:#ff1493}
.c_purple {color:#8a00ff}
```
